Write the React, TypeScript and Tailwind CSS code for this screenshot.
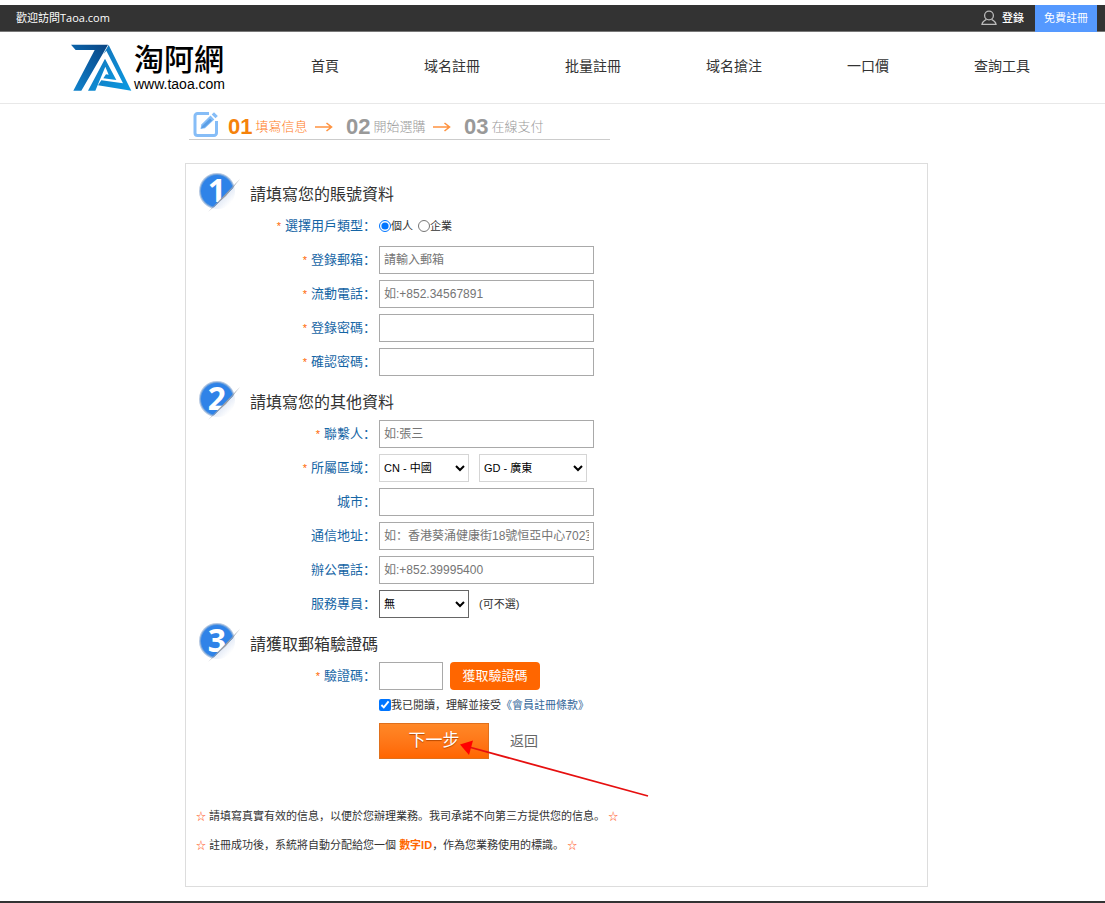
import type { ReactNode } from 'react'

const navItems = ['首頁', '域名註冊', '批量註冊', '域名搶注', '一口價', '查詢工具']

const steps = [
  { no: '01', text: '填寫信息', active: true },
  { no: '02', text: '開始選購', active: false },
  { no: '03', text: '在線支付', active: false },
]

const inputClass =
  'h-7 w-[215px] border border-[#a9a9a9] bg-white px-1 text-xs text-[#333] placeholder:text-[#757575]'

function Logo() {
  return (
    <a href="#" className="flex items-center gap-[2px] text-black" aria-label="淘阿網">
      <svg width="61" height="48" viewBox="15 18 183 144" aria-hidden="true">
        <defs>
          <linearGradient id="logoDark" x1="0" y1="1" x2="1" y2="0">
            <stop offset="0" stopColor="#1187d0" />
            <stop offset="0.5" stopColor="#0b62a8" />
            <stop offset="1" stopColor="#0a4482" />
          </linearGradient>
          <linearGradient id="logoLight" x1="0" y1="0" x2="1" y2="1">
            <stop offset="0" stopColor="#1372b8" />
            <stop offset="1" stopColor="#0b9be3" />
          </linearGradient>
        </defs>
        <g transform="translate(0 2)">
          <path d="M15 18H126L46 156H22L86 34H29Z" fill="url(#logoDark)" />
          <path d="M128 19L196 156L96 140L106 125L171 134L121 36L112 47Z" fill="url(#logoLight)" />
          <path d="M66 156L117 60L151 124L112 119L120 107L128 108L118 84L88 156Z" fill="url(#logoLight)" />
        </g>
      </svg>
      <span className="flex flex-col gap-[2px]">
        <span className="text-[30px] leading-[30px] font-medium">淘阿網</span>
        <span className="font-['Liberation_Sans'] text-[14px] leading-4 font-medium">www.taoa.com</span>
      </span>
    </a>
  )
}

function StepArrow() {
  return (
    <svg width="18" height="10" viewBox="0 0 18 10" fill="none" stroke="#ff9340" strokeWidth="1.6" aria-hidden="true">
      <path d="M0 5H16M11.5 1L16.5 5L11.5 9" />
    </svg>
  )
}

function Badge({ no }: { no: number }) {
  return (
    <svg width="42" height="44" viewBox="0 0 42 44" aria-hidden="true">
      <defs>
        <clipPath id={`cut${no}`}>
          <path d="M0 0H42V12L10 44H0Z" />
        </clipPath>
        <linearGradient id={`fold${no}`} x1="0.4" y1="0.4" x2="0.9" y2="0.9">
          <stop offset="0.3" stopColor="#d5e0f2" />
          <stop offset="0.9" stopColor="#fff" />
        </linearGradient>
      </defs>
      <circle cx="19" cy="24" r="17" fill={`url(#fold${no})`} />
      <g clipPath={`url(#cut${no})`}>
        <circle cx="18" cy="23" r="18" fill="#b5c8e2" />
        <circle cx="18" cy="23" r="17" fill="#6a9fdc" />
        <circle cx="18" cy="23" r="16" fill="#2f83e8" />
        <text x="18" y="34" textAnchor="middle" fill="#fff" fontSize="32" fontWeight="bold" fontFamily="Open Sans">
          {no}
        </text>
      </g>
      <path d="M9 44L41 11L27 28Z" fill="#9a9fa8" />
    </svg>
  )
}

function SectionTitle({ no, children }: { no: number; children: ReactNode }) {
  return (
    <div className="flex h-11 items-end gap-[9px] pl-[13px]">
      <Badge no={no} />
      <h2 className="pb-[5px] text-base leading-6 text-[#333]">{children}</h2>
    </div>
  )
}

function Row({ id, label, required, children }: { id: string; label: string; required?: boolean; children: ReactNode }) {
  return (
    <div className="flex h-7 items-center">
      <label htmlFor={id} className="w-[193px] shrink-0 pr-[3px] text-right text-[13px] text-[#1565a5]">
        {required && <span className="mr-1 text-[11px] text-[#ff6600]">*</span>}
        {label}：
      </label>
      {children}
    </div>
  )
}

export default function App() {
  return (
    <div className="bg-white pt-[5px] font-['Open_Sans','Noto_Sans_CJK_SC',sans-serif] text-[11px] text-[#333]">
      {/* Top bar */}
      <div className="flex h-[27px] items-center border-b border-[#777] bg-[#333] pl-4 text-white">
        <span className="mr-auto">歡迎訪問Taoa.com</span>
        <a href="#" className="mr-[11px] flex items-center gap-[5px] font-medium">
          <svg width="16" height="16" viewBox="0 0 16 16" fill="none" stroke="#bbb" strokeWidth="1.3" aria-hidden="true">
            <circle cx="8" cy="5.5" r="4.4" />
            <path d="M5.5 9.3C3 10.5 1.3 12.3 1 14.3H15C14.7 12.3 13 10.5 10.5 9.3" />
          </svg>
          登錄
        </a>
        <a href="#" className="mr-2 flex h-[27px] items-center bg-[#5599ff] px-[9px]">
          免費註冊
        </a>
      </div>

      {/* Header */}
      <header className="flex h-[72px] items-center border-b border-[#e8e8e8] pl-[71px] pr-[75px]">
        <Logo />
        <nav className="mb-1 ml-auto flex gap-[85px] text-sm">
          {navItems.map((item) => (
            <a key={item} href="#">
              {item}
            </a>
          ))}
        </nav>
      </header>

      <main className="mx-auto max-w-[751px] pl-2">
        {/* Steps */}
        <div className="ml-1 flex h-9 w-[421px] items-center border-b border-[#ccc] pl-1">
          <svg width="26" height="26" viewBox="0 0 26 26" className="mt-[5px] mr-[9px]" fill="none" aria-hidden="true">
            <path d="M16 2.5H4.500a2.500 2.500 0 0 0-2.500 2.500V22a2.500 2.500 0 0 0 2.500 2.500H21a2.500 2.500 0 0 0 2.500-2.500V10" stroke="#86bdf7" strokeWidth="3" />
            <path d="M7.500 18L8.300 13.400L17.500 4.600L21.300 8.400L12 17.300Z" fill="#86bdf7" />
            <path d="M8 17.500L9.600 14.500L17 7.500L19 9.500L11.500 16.500Z" fill="#5b9fe6" />
            <path d="M18.700 3.400L21 1.200L24.800 5L22.500 7.200Z" fill="#86bdf7" />
          </svg>
          {steps.map((step, i) => (
            <div key={step.no} className="flex w-[118px] items-center gap-[3px] pt-[11px]">
              <span
                className={`font-['Liberation_Sans'] text-[22px] leading-6 font-bold ${step.active ? 'text-[#f5820b]' : 'text-[#999]'}`}
              >
                {step.no}
              </span>
              <span className={`mr-1 shrink-0 text-[13px] font-light ${step.active ? 'text-[#ff7a22]' : 'text-[#999]'}`}>{step.text}</span>
              {i < 2 && <StepArrow />}
            </div>
          ))}
        </div>

        {/* Register form */}
        <form
          className="mt-[23px] border border-[#ddd] pt-1 font-['Liberation_Sans','Noto_Sans_CJK_SC',sans-serif]"
          onSubmit={(e) => e.preventDefault()}
        >
          <SectionTitle no={1}>請填寫您的賬號資料</SectionTitle>
          <div className="flex flex-col gap-[6px]">
            <Row id="personal" label="選擇用戶類型" required>
              <input id="personal" type="radio" name="userType" defaultChecked className="size-3" />
              <label htmlFor="personal" className="mr-[5px]">個人</label>
              <input id="company" type="radio" name="userType" className="size-3" />
              <label htmlFor="company">企業</label>
            </Row>
            <Row id="email" label="登錄郵箱" required>
              <input id="email" type="text" placeholder="請輸入郵箱" className={inputClass} />
            </Row>
            <Row id="mobile" label="流動電話" required>
              <input id="mobile" type="text" placeholder="如:+852.34567891" className={inputClass} />
            </Row>
            <Row id="password" label="登錄密碼" required>
              <input id="password" type="password" className={inputClass} />
            </Row>
            <Row id="confirm" label="確認密碼" required>
              <input id="confirm" type="password" className={inputClass} />
            </Row>
          </div>

          <SectionTitle no={2}>請填寫您的其他資料</SectionTitle>
          <div className="flex flex-col gap-[6px]">
            <Row id="contact" label="聯繫人" required>
              <input id="contact" type="text" placeholder="如:張三" className={inputClass} />
            </Row>
            <Row id="country" label="所屬區域" required>
              <select id="country" className="mr-[10px] h-7 w-[90px] border border-[#d5d5d5] bg-white text-black">
                <option>CN - 中國</option>
              </select>
              <select aria-label="省份" className="h-7 w-[108px] border border-[#d5d5d5] bg-white text-black">
                <option>GD - 廣東</option>
              </select>
            </Row>
            <Row id="city" label="城市">
              <input id="city" type="text" className={inputClass} />
            </Row>
            <Row id="address" label="通信地址">
              <input id="address" type="text" placeholder="如：香港葵涌健康街18號恒亞中心702室" className={inputClass} />
            </Row>
            <Row id="phone" label="辦公電話">
              <input id="phone" type="text" placeholder="如:+852.39995400" className={inputClass} />
            </Row>
            <Row id="agent" label="服務專員">
              <select id="agent" className="mr-[10px] h-7 w-[90px] border border-[#666] bg-white text-black">
                <option>無</option>
              </select>
              <span>(可不選)</span>
            </Row>
          </div>

          <SectionTitle no={3}>請獲取郵箱驗證碼</SectionTitle>
          <Row id="code" label="驗證碼" required>
            <input id="code" type="text" className="mr-[7px] h-7 w-16 border border-[#a9a9a9] px-1 text-xs" />
            <button type="button" className="h-7 w-[90px] rounded bg-[#ff6600] text-[13px] text-white">
              獲取驗證碼
            </button>
          </Row>

          <div className="mt-[6px] flex h-[18px] items-center pl-[193px]">
            <input id="agree" type="checkbox" defaultChecked className="size-3" />
            <label htmlFor="agree">我已閱讀，理解並接受</label>
            <a href="#" className="text-[#336699]">《會員註冊條款》</a>
          </div>

          <div className="relative mt-[9px] flex items-center gap-[21px] pl-[193px]">
            <button
              type="submit"
              className="h-9 w-[110px] border border-[#e0701c] bg-linear-to-b from-[#ff8827] to-[#ff6600] text-[17px] text-white [text-shadow:0_1px_1px_#b84a00]"
            >
              下一步
            </button>
            <a href="#" className="text-sm text-[#666]">返回</a>
            {/* Pointer to the submit button */}
            <svg
              width="190"
              height="60"
              viewBox="0 0 190 60"
              className="pointer-events-none absolute left-[273px] top-[15px]"
              aria-hidden="true"
            >
              <path d="M10 9L189 58" stroke="#e60f0f" strokeWidth="1.8" />
              <path d="M1 6.500L14 2.500L10 17Z" fill="#ff0000" />
            </svg>
          </div>

          <div className="mt-[43px] pb-[26px] pl-[10px] leading-[29px]">
            <p>
              <span className="text-[10px] text-[#ff5a1f]">☆</span> 請填寫真實有效的信息，以便於您辦理業務。我司承諾不向第三方提供您的信息。{' '}
              <span className="text-[10px] text-[#ff5a1f]">☆</span>
            </p>
            <p>
              <span className="text-[10px] text-[#ff5a1f]">☆</span> 註冊成功後，系統將自動分配給您一個{' '}
              <b className="text-[#ff6600]">數字ID</b>，作為您業務使用的標識。{' '}
              <span className="text-[10px] text-[#ff5a1f]">☆</span>
            </p>
          </div>
        </form>
      </main>

      <footer className="mt-[14px] h-[2px] bg-[#333]" />
    </div>
  )
}
